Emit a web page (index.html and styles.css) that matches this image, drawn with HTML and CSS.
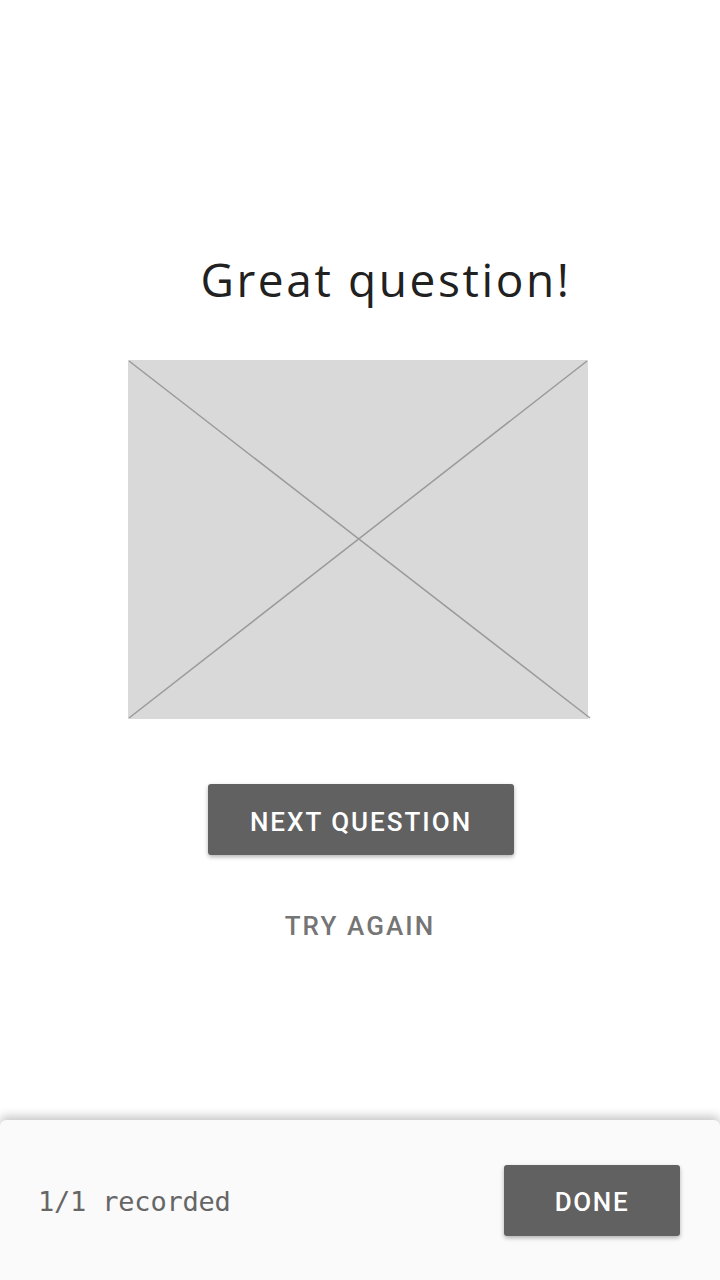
FILE: index.html
```html
<!DOCTYPE html>
<html>
<head>
<meta charset="utf-8">
<link rel="stylesheet" href="styles.css">
</head>
<body>
<div class="screen">
  <main class="content">
    <h1 class="title">Great question!</h1>
    <div class="placeholder">
      <svg class="ph-svg" viewBox="0 0 460 359" preserveAspectRatio="none" width="460" height="359">
        <rect x="0" y="0" width="460" height="359" fill="#d9d9d9"/>
        <line x1="1" y1="1" x2="462" y2="358" stroke="#9a9a9a" stroke-width="1.5"/>
        <line x1="459" y1="1" x2="1" y2="358" stroke="#9a9a9a" stroke-width="1.5"/>
      </svg>
    </div>
    <button class="btn btn-primary">NEXT QUESTION</button>
    <button class="btn-text">TRY AGAIN</button>
  </main>
  <footer class="sheet">
    <span class="status">1/1 recorded</span>
    <button class="btn btn-done">DONE</button>
  </footer>
</div>
</body>
</html>
```

FILE: styles.css
```css
* { box-sizing: border-box; }
html, body {
  margin: 0;
  padding: 0;
  background: #ffffff;
}
.screen {
  width: 720px;
  height: 1280px;
  display: flex;
  flex-direction: column;
  overflow: hidden;
}
.content {
  flex: 1;
  display: flex;
  flex-direction: column;
  align-items: center;
  padding-top: 248px;
}
.title {
  margin: 0 0 0 52px;
  font-family: "Open Sans", "Noto Sans", sans-serif;
  font-weight: 400;
  font-size: 46px;
  line-height: 62px;
  color: #212121;
  letter-spacing: 2.6px;
}
.placeholder {
  margin-top: 50px;
  width: 460px;
  height: 359px;
  margin-left: -4px;
}
.ph-svg {
  display: block;
  overflow: visible;
}
.btn {
  border: none;
  border-radius: 3px;
  background: #616161;
  color: #ffffff;
  font-family: Roboto, "Liberation Sans", sans-serif;
  font-weight: 500;
  font-size: 26px;
  letter-spacing: 2px;
  box-shadow: 0 2px 4px rgba(0,0,0,0.3);
  padding: 4px 0 0 0;
}
.btn-primary {
  margin-top: 65px;
  margin-left: 2px;
  width: 306px;
  height: 71px;
}
.btn-text {
  margin-top: 56px;
  border: none;
  background: transparent;
  color: #757575;
  font-family: Roboto, "Liberation Sans", sans-serif;
  font-weight: 500;
  font-size: 26px;
  letter-spacing: 2.1px;
  padding: 0;
}
.sheet {
  height: 160px;
  background: #fafafa;
  border-radius: 6px 6px 0 0;
  box-shadow: 0 -4px 10px rgba(0,0,0,0.22);
  display: flex;
  align-items: center;
  justify-content: space-between;
  padding: 0 40px 0 38px;
}
.status {
  font-family: "DejaVu Sans Mono", "Liberation Mono", monospace;
  font-size: 27px;
  color: #666666;
  letter-spacing: -0.2px;
  padding-top: 2px;
}
.btn-done {
  width: 176px;
  height: 71px;
  letter-spacing: 1.6px;
}
```
